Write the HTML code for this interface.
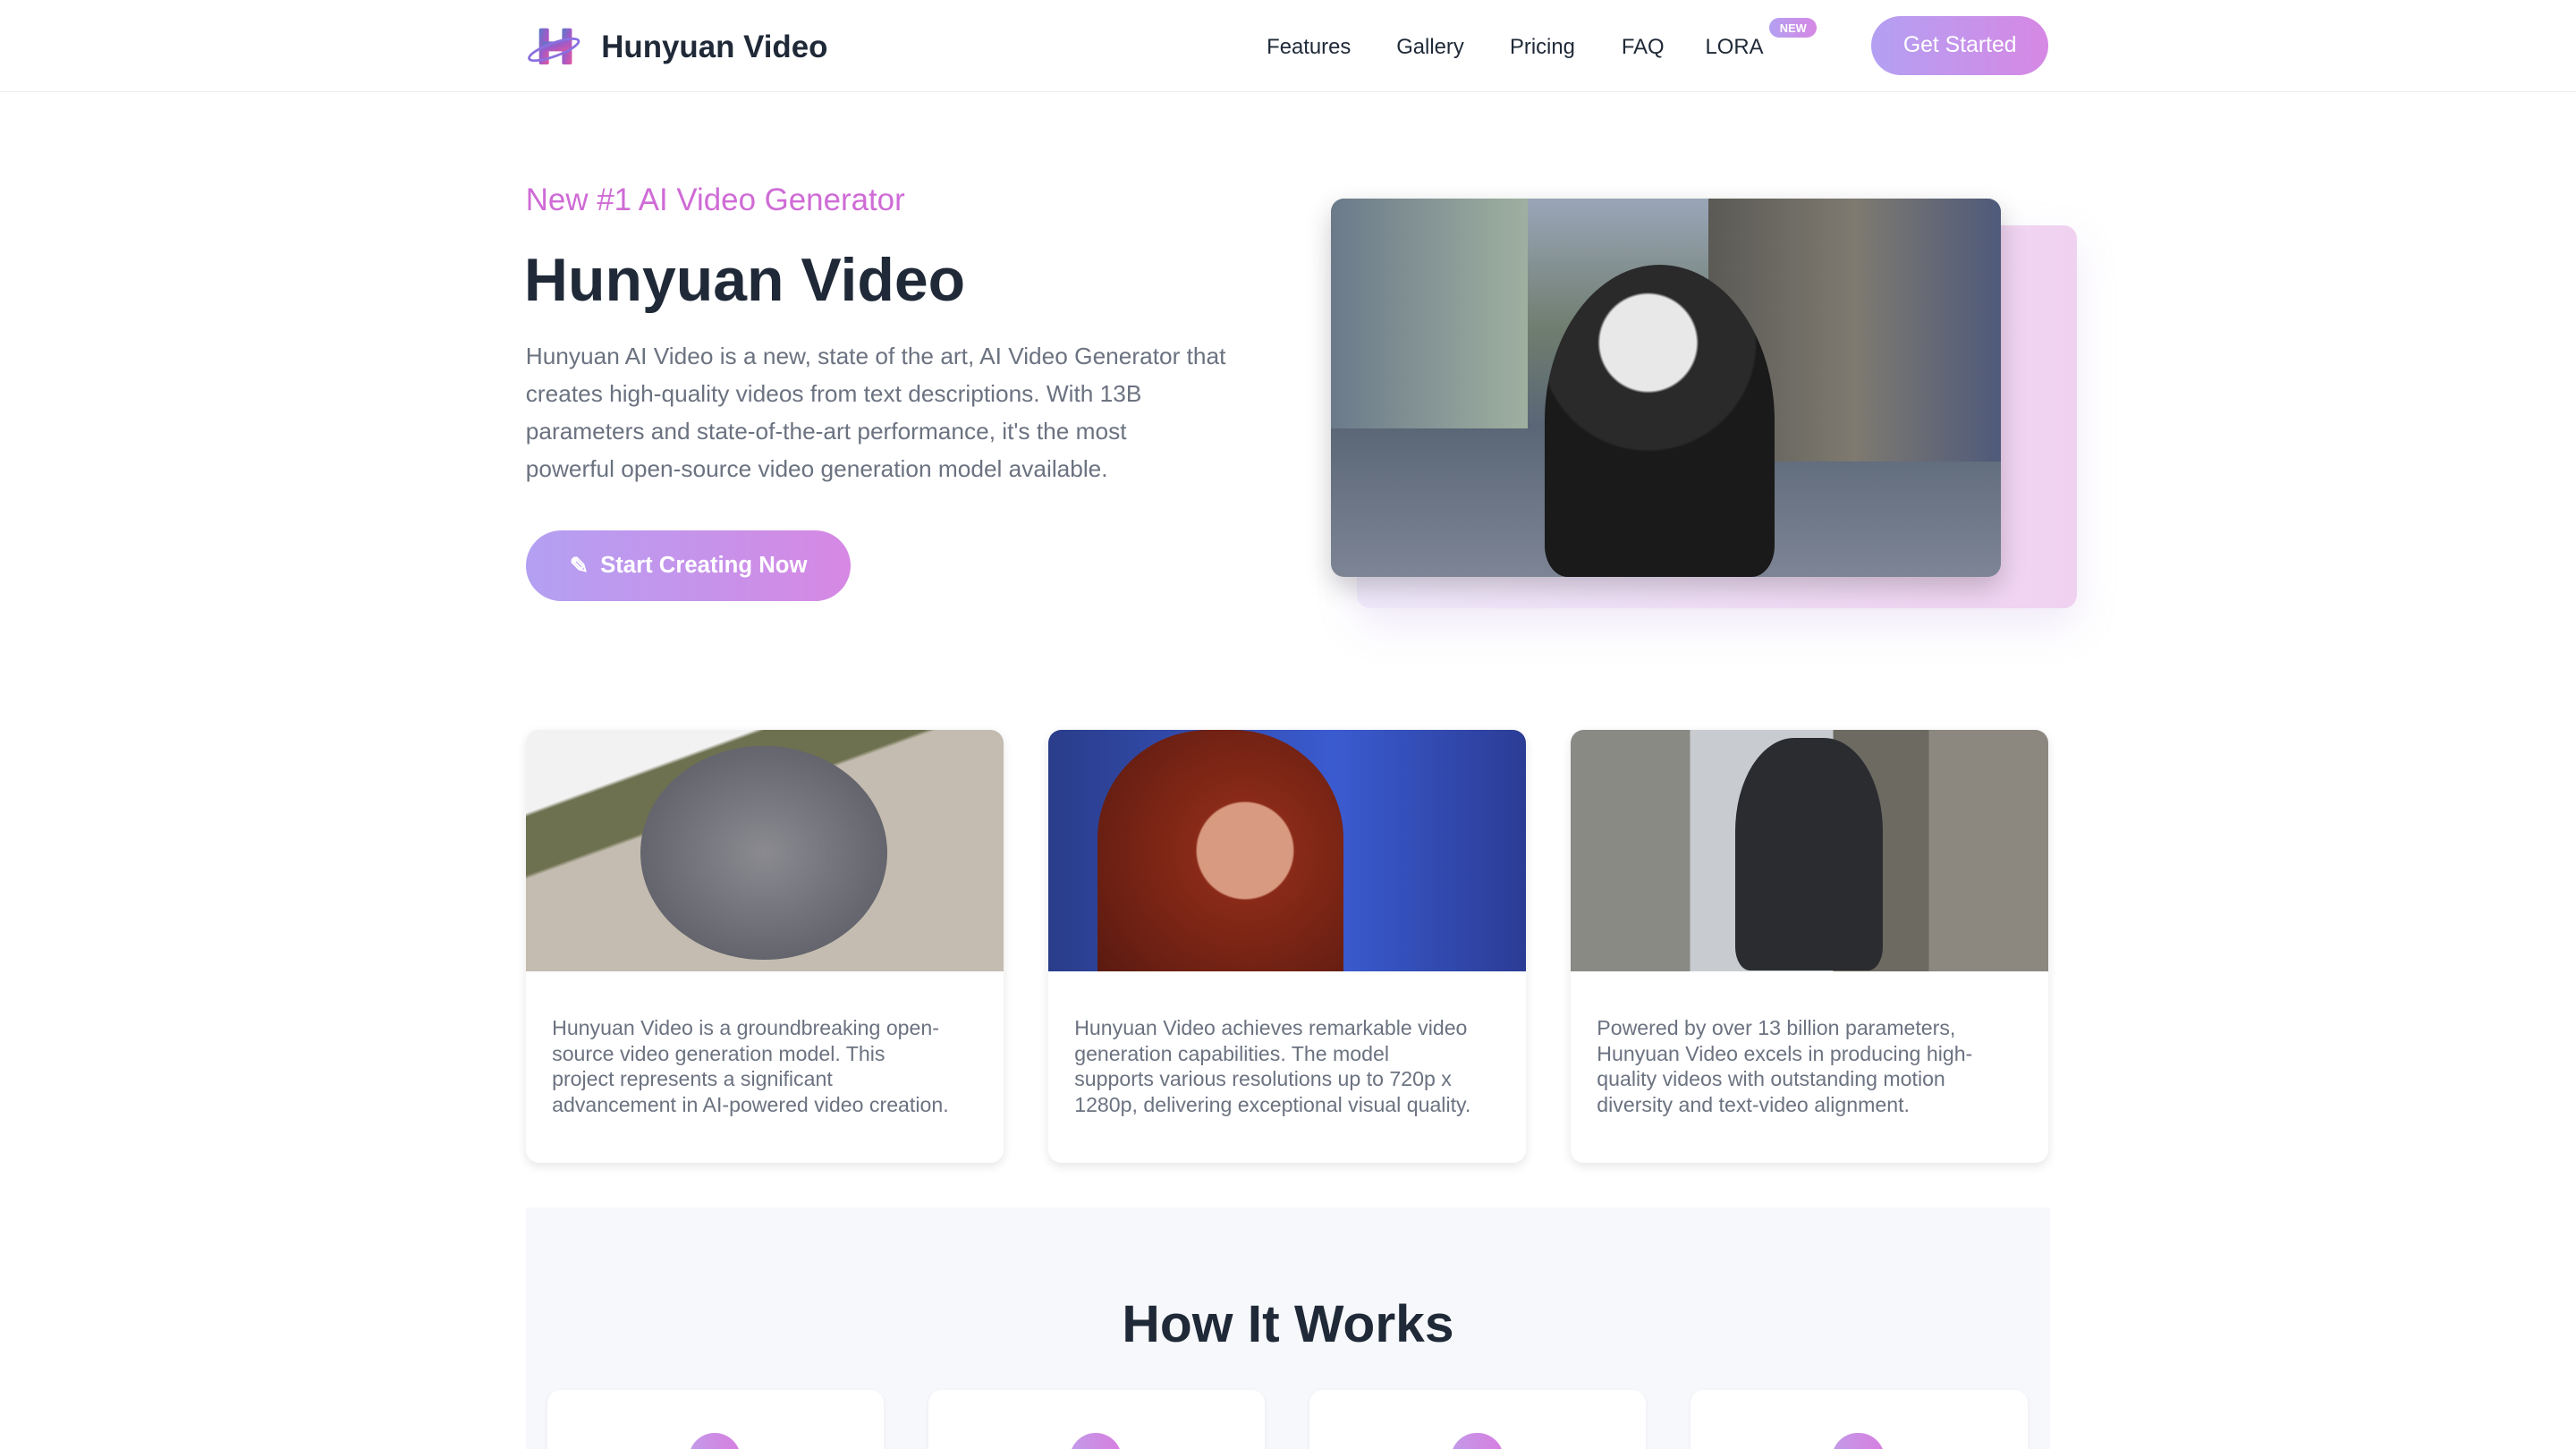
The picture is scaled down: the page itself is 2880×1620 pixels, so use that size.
<!DOCTYPE html>
<html><head><meta charset="utf-8"><style>
*{margin:0;padding:0;box-sizing:border-box}
html,body{width:2880px;height:1620px;overflow:hidden;background:#fff}
#r{zoom:1.83674;width:1568px;height:882px;position:relative;font-family:"Liberation Sans",sans-serif;color:#1f2937}
.a{position:absolute}
header{position:absolute;left:0;top:0;width:1568px;height:56px;border-bottom:1px solid #ececf0}
.nav{font-size:13px;color:#1f2937;top:21px}
.btn{background:linear-gradient(90deg,#b3a0f2,#d688e4);color:#fff;font-weight:bold;display:flex;align-items:center;justify-content:center}
.card{background:#fff;border-radius:8px;box-shadow:0 2px 6px rgba(0,0,0,.1);overflow:hidden;width:291px;height:264px;top:444px}
.card .img{height:147px}
.card p{padding:27px 0 0 16px;font-size:12.6px;line-height:15.6px;color:#6b7280;white-space:nowrap}
.hc{background:#fff;border-radius:8px;width:205px;height:60px;top:846px;box-shadow:0 1px 3px rgba(0,0,0,.06)}
.hc i{position:absolute;left:86px;top:26px;width:32px;height:32px;border-radius:50%;background:linear-gradient(90deg,#c39ae8,#d77ee0)}
</style></head><body><div id="r">
<header>
<svg class="a" style="left:320px;top:15px" width="34" height="26" viewBox="0 0 34 26"><defs><linearGradient id="g" x1="0" y1="0" x2="1" y2="1"><stop offset="0" stop-color="#5a79c8"/><stop offset=".5" stop-color="#a05ac8"/><stop offset="1" stop-color="#e0569e"/></linearGradient></defs>
<rect x="8" y="2" width="6" height="22" rx="1" fill="url(#g)"/><rect x="22" y="2" width="6" height="22" rx="1" fill="url(#g)"/><rect x="10" y="10" width="16" height="6" fill="url(#g)"/>
<ellipse cx="17" cy="15" rx="16" ry="4" transform="rotate(-20 17 15)" fill="none" stroke="#8b6fe0" stroke-width="1.5"/></svg>
<div class="a" style="left:366px;top:18px;font-size:19px;font-weight:bold;color:#1f2937">Hunyuan Video</div>
<div class="a nav" style="left:771px">Features</div>
<div class="a nav" style="left:850px">Gallery</div>
<div class="a nav" style="left:919px">Pricing</div>
<div class="a nav" style="left:987px">FAQ</div>
<div class="a nav" style="left:1038px">LORA</div>
<div class="a btn" style="left:1077px;top:11px;width:29px;height:12px;border-radius:6px;font-size:7px">NEW</div>
<div class="a btn" style="left:1139px;top:10px;width:108px;height:36px;border-radius:18px;font-size:13.5px;font-weight:normal">Get Started</div>
</header>
<div class="a" style="left:320px;top:111px;font-size:19px;color:#cf6bd6">New #1 AI Video Generator</div>
<div class="a" style="left:319px;top:149px;font-size:37px;font-weight:bold;color:#1f2937">Hunyuan Video</div>
<div class="a" style="left:320px;top:205px;white-space:nowrap;font-size:14.3px;line-height:23px;color:#6b7280">Hunyuan AI Video is a new, state of the art, AI Video Generator that<br>creates high-quality videos from text descriptions. With 13B<br>parameters and state-of-the-art performance, it's the most<br>powerful open-source video generation model available.</div>
<div class="a btn" style="left:320px;top:323px;width:198px;height:43px;border-radius:22px;font-size:14px"><span style="margin-right:7px">✎</span>Start Creating Now</div>
<div class="a" style="left:826px;top:137px;width:438px;height:233px;border-radius:8px;background:linear-gradient(90deg,#efe9fb,#f0d2f0);box-shadow:0 10px 25px rgba(180,150,220,.2)"></div>
<div class="a" style="left:810px;top:121px;width:408px;height:230px;border-radius:8px;overflow:hidden;box-shadow:0 6px 16px rgba(0,0,0,.2);background:linear-gradient(180deg,#9aa6b8 0%,#6f7d6f 35%,#5a6676 60%,#7d8595 100%)">
<div class="a" style="left:0;top:0;width:120px;height:140px;background:linear-gradient(90deg,#6b7a8a,#9fb0a0)"></div>
<div class="a" style="left:230px;top:0;width:178px;height:160px;background:linear-gradient(90deg,#5b5a55,#7e7a70,#4f5a7a)"></div>
<div class="a" style="left:130px;top:40px;width:140px;height:190px;border-radius:50% 50% 10% 10%;background:radial-gradient(circle at 45% 25%,#e8e8e8 0 18%,#2a2a2a 19% 40%,#1a1a1a 41%)"></div>
</div>
<div class="a card" style="left:320px"><div class="img" style="background:linear-gradient(160deg,#f2f2f2 0 20%,#6d7150 21% 35%,#c4bcb0 36%);position:relative"><div class="a" style="left:70px;top:10px;width:150px;height:130px;border-radius:50%;background:radial-gradient(#8a8a90,#555560)"></div></div><p>Hunyuan Video is a groundbreaking open-<br>source video generation model. This<br>project represents a significant<br>advancement in AI-powered video creation.</p></div>
<div class="a card" style="left:638px"><div class="img" style="background:linear-gradient(90deg,#2a3d8a,#3a5bd0 60%,#2b3c95);position:relative"><div class="a" style="left:30px;top:0;width:150px;height:147px;border-radius:45% 45% 0 0;background:radial-gradient(circle at 60% 50%,#d89a80 0 25%,#8a2a18 26%,#5a1a10)"></div></div><p>Hunyuan Video achieves remarkable video<br>generation capabilities. The model<br>supports various resolutions up to 720p x<br>1280p, delivering exceptional visual quality.</p></div>
<div class="a card" style="left:956px"><div class="img" style="background:linear-gradient(90deg,#8a8a85 0 25%,#c8ccd0 25% 55%,#6d6a62 55% 75%,#8c8880 75%);position:relative"><div class="a" style="left:100px;top:5px;width:90px;height:142px;border-radius:40% 40% 10% 10%;background:#2a2c30"></div></div><p>Powered by over 13 billion parameters,<br>Hunyuan Video excels in producing high-<br>quality videos with outstanding motion<br>diversity and text-video alignment.</p></div>
<div class="a" style="left:320px;top:735px;width:928px;height:160px;background:#f7f8fc"></div>
<div class="a" style="left:320px;top:788px;width:928px;text-align:center;font-size:32px;font-weight:bold;color:#1f2937">How It Works</div>
<div class="a hc" style="left:333px"><i></i></div>
<div class="a hc" style="left:565px"><i></i></div>
<div class="a hc" style="left:797px"><i></i></div>
<div class="a hc" style="left:1029px"><i></i></div>
</div></body></html>
